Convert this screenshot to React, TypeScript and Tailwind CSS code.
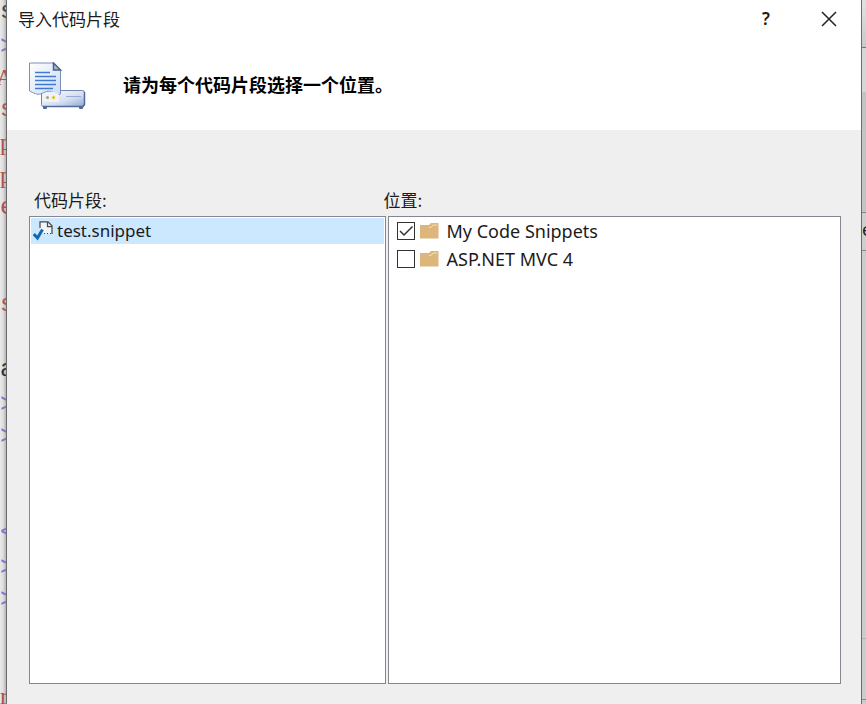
import { useState } from "react";

const sans = "font-['Liberation_Mono',monospace] text-[24px]";
const serif = "font-['Liberation_Serif',serif] text-[24px]";
const angle = "font-['Noto_Sans',sans-serif] text-[27px]";

const codeRows = [
  { text: "s", style: `${sans} text-[#444]` },
  { text: ">", style: `${angle} text-[#7a76d0]` },
  { text: "A", style: `${serif} -indent-1 text-[#b0514c]` },
  { text: "s", style: `${sans} text-[#b0514c]` },
  { text: "p", style: `${serif} text-[#b0514c]` },
  { text: "p", style: `${serif} text-[#b0514c]` },
  { text: "e", style: `${sans} text-[#b0514c]` },
  { text: "", style: "" },
  { text: "", style: "" },
  { text: "s", style: `${sans} text-[#b0514c]` },
  { text: "", style: "" },
  { text: "a", style: `${sans} text-[#333]` },
  { text: ">", style: `${angle} text-[#7a76d0]` },
  { text: ">", style: `${angle} text-[#7a76d0]` },
  { text: "", style: "" },
  { text: "", style: "" },
  { text: "<", style: `${sans} text-[#7a76d0]` },
  { text: ">", style: `${angle} text-[#7a76d0]` },
  { text: ">", style: `${angle} text-[#7a76d0]` },
  { text: "", style: "" },
  { text: "", style: "" },
  { text: "r", style: `${serif} text-[#b0514c]` },
];

function EditorEdge() {
  return (
    <div className="relative w-[7px] shrink-0 overflow-hidden border-r border-[#6b6b6b] bg-linear-to-r from-[#e9e9e9] via-[#dedede] to-[#b5b5b5]">
      <div className="absolute inset-x-0 -top-1 -bottom-2 flex flex-col">
        {codeRows.map((row, i) => (
          <div key={i} className={`flex min-h-0 flex-1 items-center leading-8 ${row.style}`}>
            <span>{row.text}</span>
          </div>
        ))}
      </div>
    </div>
  );
}

function WindowEdge() {
  return (
    <div className="flex w-[5px] shrink-0 flex-col overflow-hidden border-l border-[#6b6b6b] bg-[#cccccc]">
      <div className="h-12 border-b border-[#777] bg-linear-to-b from-[#e2e2e2] to-[#c9c9c9]" />
      <div className="h-11 bg-[#d6d6d6]" />
      <div className="h-[121px] border-b border-[#858585] bg-[#c4c4c4]" />
      <div className="flex h-[38px] items-center border-b border-[#858585] bg-[#cfcfcf] pb-1 font-['Noto_Sans',sans-serif] text-[18px] text-[#222]">e</div>
      <div className="flex-1 border-b border-[#b0b0b0]" />
      <div className="h-[61px] border-b border-[#888]" />
      <div className="h-1" />
    </div>
  );
}

function ImportIcon() {
  return (
    <svg className="h-12 w-[58px]" viewBox="0 0 58 48" fill="none" aria-hidden="true">
      <defs>
        <linearGradient id="sheet" x1="0" y1="0" x2="1" y2="1">
          <stop stopColor="#ffffff" />
          <stop offset="1" stopColor="#c9dbf5" />
        </linearGradient>
        <linearGradient id="drive" x1="0" y1="0" x2="1" y2="1">
          <stop stopColor="#fdfeff" />
          <stop offset="0.6" stopColor="#d4def2" />
          <stop offset="1" stopColor="#91a7d0" />
        </linearGradient>
      </defs>
      <rect x="14" y="43" width="4" height="4" rx="1" fill="#53688e" />
      <rect x="50" y="43" width="4" height="4" rx="1" fill="#53688e" />
      <rect x="12.5" y="28.5" width="43" height="16" rx="2" fill="url(#drive)" stroke="#7084ad" />
      <path d="M14 44.5h40l1.500-2V30" stroke="#526b9c" strokeWidth="1.5" />
      <path d="M37 34.500h15" stroke="#9aabd0" />
      <path d="M0.500 1h24l7 7v24c-3 2-5 0-7-1.500-5-3-9 0-13 1.500-3 1-7-1-11-3Z" fill="url(#sheet)" stroke="#7890b8" />
      <path d="M24.500 1v7h7Z" fill="#a9bcda" stroke="#4b6286" strokeWidth="1.5" />
      <path d="M6 10.500h15M6 14.500h21M6 18.500h21M6 22.500h21M6 26.500h18" stroke="#4379cf" strokeWidth="1.5" />
      <path d="M13 34c3-5 13-6 17-1v7H13Z" fill="#eef3fb" />
      <circle cx="18.5" cy="35.5" r="1.5" fill="#a6a66c" />
      <circle cx="24.5" cy="35.5" r="2" fill="#f3df76" />
      <circle cx="24.5" cy="35.5" r="1" fill="#c0a53d" />
    </svg>
  );
}

function SnippetIcon() {
  return (
    <svg className="h-5 w-5 shrink-0" viewBox="0 0 20 20" fill="none" aria-hidden="true">
      <path d="M7 7V0.750h8l4 4V12.500H7Z" fill="#f1f4f8" />
      <path d="M7 7V0.750h8l4 4V13" stroke="#4a4a4a" strokeWidth="1.25" />
      <path d="M14.500 1v4.500H19" stroke="#4a4a4a" strokeWidth="1.25" />
      <path d="M11 12.500h8" stroke="#444" strokeWidth="1" strokeDasharray="1 2" />
      <path d="m0.750 13 3.750 4 5-8.500" stroke="#1767ad" strokeWidth="3" />
    </svg>
  );
}

function FolderIcon() {
  return (
    <svg className="h-4 w-[19px] shrink-0" viewBox="0 0 19 16" aria-hidden="true">
      <path d="M0 2h9l2-2h7.500v15.500H0Z" fill="#dcb67a" />
      <path d="M9 4.500h2l2-2.500h4" stroke="#f0dfc2" fill="none" />
    </svg>
  );
}

function LocationItem({ name, initial }: { name: string; initial: boolean }) {
  const [checked, setChecked] = useState(initial);
  return (
    <li>
      <label className="flex h-7 items-center text-[18px]">
        <span className="relative mr-[5px] flex h-[18px] w-[18px] shrink-0">
          <input
            type="checkbox"
            checked={checked}
            onChange={(e) => setChecked(e.target.checked)}
            className="h-[18px] w-[18px] appearance-none border border-[#333] bg-white"
          />
          {checked && (
            <svg className="pointer-events-none absolute inset-0" viewBox="0 0 18 18" fill="none" aria-hidden="true">
              <path d="m3 9 4 4 8.500-8.500" stroke="#333" strokeWidth="1.5" />
            </svg>
          )}
        </span>
        <FolderIcon />
        <span className="ml-2 whitespace-nowrap">{name}</span>
      </label>
    </li>
  );
}

export default function App() {
  return (
    <div className="flex min-h-screen font-['Noto_Sans','Noto_Sans_CJK_SC',sans-serif] text-[#1b1b1b]">
      <EditorEdge />
      <main role="dialog" aria-labelledby="title" className="flex min-w-0 flex-1 flex-col bg-[#efefef]">
        <header className="h-[130px] bg-white">
          <div className="flex h-[38px] items-center pl-[11px]">
            <h1 id="title" className="flex-1 font-['Noto_Sans_CJK_SC',sans-serif] text-[17px] leading-6">导入代码片段</h1>
            <button type="button" aria-label="帮助" className="flex h-full w-[62px] items-center justify-center text-[17px] font-semibold">?</button>
            <button type="button" aria-label="关闭" className="flex h-full w-16 items-center justify-center">
              <svg className="h-4 w-4" viewBox="0 0 16 16" fill="none" aria-hidden="true">
                <path d="m1 1 14 14M15 1 1 15" stroke="#222" strokeWidth="1.5" />
              </svg>
            </button>
          </div>
          <div className="flex h-24 items-center pl-[22px]">
            <ImportIcon />
            <p className="ml-9 pb-1 font-['Noto_Sans_CJK_SC',sans-serif] text-[18px] leading-6 font-bold text-black">请为每个代码片段选择一个位置。</p>
          </div>
        </header>
        <div className="grid flex-1 grid-cols-[357fr_454fr] gap-x-0.5 pt-[58px] pr-5 pb-5 pl-[22px]">
          <section className="flex flex-col">
            <h2 id="snippets" className="h-7 pl-[5px] font-['Noto_Sans_CJK_SC',sans-serif] text-[17px] leading-6">代码片段:</h2>
            <ul role="listbox" aria-labelledby="snippets" className="flex-1 border border-[#828790] bg-white p-px">
              <li role="option" aria-selected="true" className="flex h-[26px] items-center bg-[#cce8ff] pl-0.5 text-[17px]">
                <SnippetIcon />
                <span className="ml-1">test.snippet</span>
              </li>
            </ul>
          </section>
          <section className="flex flex-col">
            <h2 id="locations" className="-ml-1 h-7 font-['Noto_Sans_CJK_SC',sans-serif] text-[17px] leading-6">位置:</h2>
            <ul aria-labelledby="locations" className="flex-1 border border-[#828790] bg-white pl-2">
              <LocationItem name="My Code Snippets" initial={true} />
              <LocationItem name="ASP.NET MVC 4" initial={false} />
            </ul>
          </section>
        </div>
      </main>
      <WindowEdge />
    </div>
  );
}
